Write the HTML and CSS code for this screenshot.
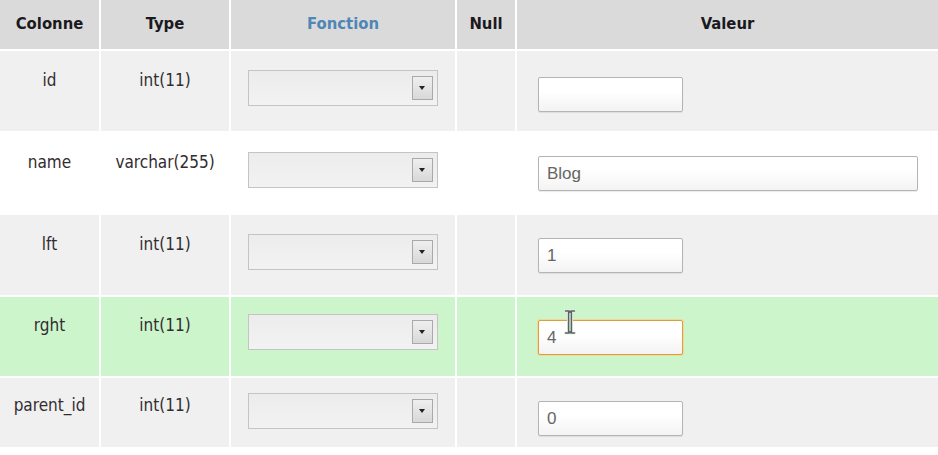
FILE: index.html
```html
<!DOCTYPE html>
<html lang="fr">
<head>
<meta charset="utf-8">
<title>Insérer</title>
<link rel="stylesheet" href="styles.css">
</head>
<body>
<div class="grid">
  <div class="th">Colonne</div>
  <div class="th">Type</div>
  <div class="th th-link">Fonction</div>
  <div class="th">Null</div>
  <div class="th">Valeur</div>

  <div class="td odd r1"><span class="txt">id</span></div>
  <div class="td odd r1"><span class="txt">int(11)</span></div>
  <div class="td odd r1"><div class="sel"><span class="btn"></span></div></div>
  <div class="td odd r1"></div>
  <div class="td odd r1 val"><div class="inp short"></div></div>

  <div class="td even r2"><span class="txt">name</span></div>
  <div class="td even r2"><span class="txt">varchar(255)</span></div>
  <div class="td even r2"><div class="sel"><span class="btn"></span></div></div>
  <div class="td even r2"></div>
  <div class="td even r2 val"><div class="inp long">Blog</div></div>

  <div class="td odd r3"><span class="txt">lft</span></div>
  <div class="td odd r3"><span class="txt">int(11)</span></div>
  <div class="td odd r3"><div class="sel"><span class="btn"></span></div></div>
  <div class="td odd r3"></div>
  <div class="td odd r3 val"><div class="inp short">1</div></div>

  <div class="td hover r4"><span class="txt">rght</span></div>
  <div class="td hover r4"><span class="txt">int(11)</span></div>
  <div class="td hover r4"><div class="sel"><span class="btn"></span></div></div>
  <div class="td hover r4"></div>
  <div class="td hover r4 val"><div class="inp short focus">4</div>
    <svg class="cursor" width="12" height="26" viewBox="0 0 12 26"><path d="M1.5 2h3.5l1 1.2 1-1.2h3.5M4.6 3.5v19M7.4 3.5v19M1.5 24h3.5l1-1.2 1 1.2h3.5" fill="none" stroke="#e8f0ea" stroke-width="3.2" stroke-linecap="round"/><path d="M1.5 2h3.5l1 1.2 1-1.2h3.5M4.6 3.5v19M7.4 3.5v19M1.5 24h3.5l1-1.2 1 1.2h3.5" fill="none" stroke="#58635e" stroke-width="1.5" stroke-linecap="round"/></svg>
  </div>

  <div class="td odd r5"><span class="txt">parent_id</span></div>
  <div class="td odd r5"><span class="txt">int(11)</span></div>
  <div class="td odd r5"><div class="sel"><span class="btn"></span></div></div>
  <div class="td odd r5"></div>
  <div class="td odd r5 val"><div class="inp short">0</div></div>
</div>
</body>
</html>
```

FILE: styles.css
```css
html, body {
  margin: 0;
  padding: 0;
  background: #ffffff;
}

body {
  font-family: "DejaVu Sans Condensed", "DejaVu Sans", sans-serif;
  font-stretch: condensed;
  color: #322c30;
}

.grid {
  display: grid;
  grid-template-columns: 99px 128px 224px 58px 1fr;
  grid-template-rows: 49px 80px 80px 80px 79px 69px;
  column-gap: 2px;
  row-gap: 2px;
  width: 938px;
}

.th {
  background: #dadada;
  display: flex;
  align-items: center;
  justify-content: center;
  font-weight: bold;
  font-size: 16.5px;
  color: #1a1a1e;
  padding-bottom: 2px;
}

.th-link {
  color: #4f86b6;
}

.td {
  display: flex;
  flex-direction: column;
  align-items: center;
  padding-top: 19px;
  box-sizing: border-box;
  font-size: 17px;
  line-height: 20px;
}

.odd { background: #f0f0f0; }
.even { background: #ffffff; }
.hover { background: #ccf5cc; }

.txt {
  display: block;
  white-space: nowrap;
}

.val {
  align-items: flex-start;
  padding-left: 21px;
  padding-top: 23px;
  position: relative;
}

.r4 .txt { margin-top: -1px; }
.r5 .txt { margin-top: -2px; }

.sel {
  margin-top: 0;
  margin-left: -1px;
  width: 190px;
  height: 36px;
  box-sizing: border-box;
  border: 1px solid #c4c4c4;
  background: linear-gradient(#ececec, #f2f2f2);
  display: flex;
  align-items: center;
  justify-content: flex-end;
  padding-right: 4px;
}

.r4 .sel { margin-top: -2px; }
.r5 .sel { margin-top: -4px; }

.btn {
  width: 21px;
  height: 24px;
  box-sizing: border-box;
  border: 1px solid #a9a9a9;
  background: linear-gradient(#efefef, #d8d8d8);
  display: flex;
  align-items: center;
  justify-content: center;
}

.btn::after {
  content: "";
  display: block;
  width: 0;
  height: 0;
  border-left: 3px solid transparent;
  border-right: 3px solid transparent;
  border-top: 4px solid #222;
}

.inp {
  height: 35px;
  box-sizing: border-box;
  border: 1px solid #b4b4b4;
  border-radius: 2px;
  background: linear-gradient(#ffffff 40%, #f3f3f3);
  box-shadow: 0 1px 1px rgba(0,0,0,0.08);
  font-family: "Liberation Sans", Arial, sans-serif;
  font-size: 17px;
  color: #666666;
  padding: 0 8px;
  display: flex;
  align-items: center;
}

.r1 .inp { margin-top: 3px; }

.short { width: 145px; }
.long { width: 380px; }

.focus {
  border: 1px solid #d7a23e;
  box-shadow: 0 0 0 1px #f2d89a;
}

.cursor {
  position: absolute;
  left: 47px;
  top: 12px;
}
```
